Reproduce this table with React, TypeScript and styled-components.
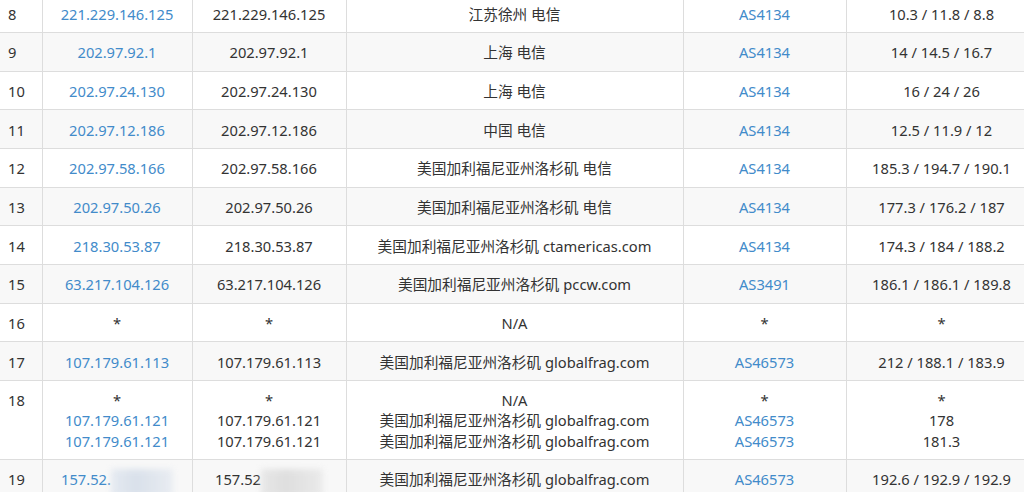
import React from "react";
import styled, { createGlobalStyle } from "styled-components";

const Global = createGlobalStyle`
  html, body { margin: 0; padding: 0; background: #fff; overflow: hidden; }
  body { width: 1024px; height: 492px; }
`;

const Page = styled.div`
  width: 1024px;
  height: 492px;
  overflow: hidden;
  font-family: "Noto Sans", "Noto Sans CJK SC", sans-serif;
  font-size: 14.7px;
  color: #333;
`;

const Table = styled.table`
  margin-top: -6.6px;
  width: 1037px;
  table-layout: fixed;
  border-collapse: collapse;
`;

const Row = styled.tr<{ $striped: boolean }>`
  background: ${(p) => (p.$striped ? "#f8f8f8" : "#ffffff")};
`;

const Cell = styled.td<{ $align?: "left" | "center" }>`
  border: 1px solid #dddddd;
  padding: 9.25px 8px 8.25px;
  line-height: 20.16px;
  text-align: ${(p) => p.$align ?? "center"};
  vertical-align: top;
  white-space: nowrap;
  overflow: hidden;
  &:first-child { border-left: none; }
`;

const Line = styled.div``;

const Link = styled.span`
  color: #428bca;
`;

const Blur = styled.span<{ $tone: string }>`
  display: inline-block;
  width: 62px;
  height: 28px;
  margin-bottom: -12px;
  vertical-align: baseline;
  background: ${(p) => p.$tone};
  filter: blur(3px);
  opacity: 0.75;
`;

type Hop = { ip: string; host?: string; loc: string; as: string; rtt: string; blur?: boolean };
type Entry = { n: number; hops: Hop[] };

const LA = "美国加利福尼亚州洛杉矶";

const data: Entry[] = [
  { n: 8, hops: [{ ip: "221.229.146.125", loc: "江苏徐州 电信", as: "AS4134", rtt: "10.3 / 11.8 / 8.8" }] },
  { n: 9, hops: [{ ip: "202.97.92.1", loc: "上海 电信", as: "AS4134", rtt: "14 / 14.5 / 16.7" }] },
  { n: 10, hops: [{ ip: "202.97.24.130", loc: "上海 电信", as: "AS4134", rtt: "16 / 24 / 26" }] },
  { n: 11, hops: [{ ip: "202.97.12.186", loc: "中国 电信", as: "AS4134", rtt: "12.5 / 11.9 / 12" }] },
  { n: 12, hops: [{ ip: "202.97.58.166", loc: `${LA} 电信`, as: "AS4134", rtt: "185.3 / 194.7 / 190.1" }] },
  { n: 13, hops: [{ ip: "202.97.50.26", loc: `${LA} 电信`, as: "AS4134", rtt: "177.3 / 176.2 / 187" }] },
  { n: 14, hops: [{ ip: "218.30.53.87", loc: `${LA} ctamericas.com`, as: "AS4134", rtt: "174.3 / 184 / 188.2" }] },
  { n: 15, hops: [{ ip: "63.217.104.126", loc: `${LA} pccw.com`, as: "AS3491", rtt: "186.1 / 186.1 / 189.8" }] },
  { n: 16, hops: [{ ip: "*", loc: "N/A", as: "*", rtt: "*" }] },
  { n: 17, hops: [{ ip: "107.179.61.113", loc: `${LA} globalfrag.com`, as: "AS46573", rtt: "212 / 188.1 / 183.9" }] },
  {
    n: 18,
    hops: [
      { ip: "*", loc: "N/A", as: "*", rtt: "*" },
      { ip: "107.179.61.121", loc: `${LA} globalfrag.com`, as: "AS46573", rtt: "178" },
      { ip: "107.179.61.121", loc: `${LA} globalfrag.com`, as: "AS46573", rtt: "181.3" },
    ],
  },
  {
    n: 19,
    hops: [{ ip: "157.52.", host: "157.52", loc: `${LA} globalfrag.com`, as: "AS46573", rtt: "192.6 / 192.9 / 192.9", blur: true }],
  },
];

const Val = ({ v, link }: { v: string; link: boolean }) =>
  link && v !== "*" ? <Link>{v}</Link> : <>{v}</>;

export default function App() {
  return (
    <Page>
      <Global />
      <Table>
        <colgroup>
          <col style={{ width: 42 }} />
          <col style={{ width: 150 }} />
          <col style={{ width: 154 }} />
          <col style={{ width: 337 }} />
          <col style={{ width: 163 }} />
          <col style={{ width: 191 }} />
        </colgroup>
        <tbody>
          {data.map((e) => (
            <Row key={e.n} $striped={e.n % 2 === 1}>
              <Cell $align="left">{e.n}</Cell>
              <Cell>
                {e.hops.map((h, i) => (
                  <Line key={i}>
                    <Val v={h.ip} link />
                    {h.blur && <Blur $tone="linear-gradient(90deg,#dfe6ef,#cfd9e6 40%,#e4e9f0)" />}
                  </Line>
                ))}
              </Cell>
              <Cell>
                {e.hops.map((h, i) => (
                  <Line key={i}>
                    {h.host ?? h.ip}
                    {h.blur && <Blur $tone="linear-gradient(90deg,#e2e2e2,#d6d6d6 40%,#e6e6e6)" />}
                  </Line>
                ))}
              </Cell>
              <Cell>
                {e.hops.map((h, i) => (
                  <Line key={i}>{h.loc}</Line>
                ))}
              </Cell>
              <Cell>
                {e.hops.map((h, i) => (
                  <Line key={i}>
                    <Val v={h.as} link />
                  </Line>
                ))}
              </Cell>
              <Cell>
                {e.hops.map((h, i) => (
                  <Line key={i}>{h.rtt}</Line>
                ))}
              </Cell>
            </Row>
          ))}
        </tbody>
      </Table>
    </Page>
  );
}
